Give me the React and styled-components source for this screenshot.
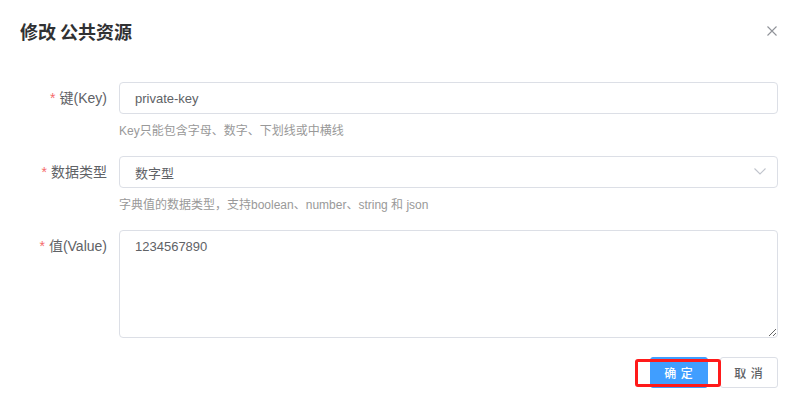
import React from 'react';
import styled, { createGlobalStyle } from 'styled-components';

const GlobalStyle = createGlobalStyle`
  html, body {
    margin: 0;
    padding: 0;
    background: #fff;
  }
  body {
    font-family: "Liberation Sans", "Noto Sans CJK SC", sans-serif;
    color: #606266;
  }
`;

const Dialog = styled.div`
  width: 796px;
  height: 419px;
  background: #fff;
  box-sizing: border-box;
  position: relative;
`;

const Header = styled.div`
  display: flex;
  align-items: center;
  justify-content: space-between;
  padding: 19px 20px 0 20px;
  height: 24px;
`;

const Title = styled.span`
  font-family: "Noto Sans CJK SC", sans-serif;
  font-size: 18px;
  line-height: 24px;
  font-weight: 700;
  color: #303133;
`;

const CloseButton = styled.button`
  border: none;
  background: none;
  padding: 0;
  width: 10px;
  height: 10px;
  display: flex;
  margin-right: -1px;
  cursor: pointer;
`;

const Body = styled.div`
  padding: 39px 18px 0 20px;
`;

const FormItem = styled.div`
  display: flex;
  margin-bottom: ${(p) => p.gap ?? 16}px;
`;

const Label = styled.label`
  width: 99px;
  flex: none;
  box-sizing: border-box;
  padding-right: 12px;
  text-align: right;
  font-size: 14px;
  line-height: 32px;
  color: #606266;
  white-space: nowrap;
`;

const Star = styled.span`
  color: #f56c6c;
  margin-right: 4px;
`;

const Content = styled.div`
  flex: 1;
  min-width: 0;
`;

const Input = styled.input`
  display: block;
  width: 100%;
  height: 32px;
  box-sizing: border-box;
  border: 1px solid #dcdfe6;
  border-radius: 4px;
  padding: 0 15px;
  font: inherit;
  font-size: 13px;
  color: #606266;
  outline: none;
  background: #fff;
`;

const SelectBox = styled.div`
  position: relative;
  height: 32px;
  box-sizing: border-box;
  border: 1px solid #dcdfe6;
  border-radius: 4px;
  padding: 0 30px 0 15px;
  display: flex;
  align-items: center;
  font-size: 13px;
  color: #606266;
`;

const Arrow = styled.svg`
  position: absolute;
  right: 11px;
  top: 11px;
`;

const TextArea = styled.textarea`
  display: block;
  width: 100%;
  height: 108px;
  box-sizing: border-box;
  border: 1px solid #dcdfe6;
  border-radius: 4px;
  padding: 5px 15px;
  font: inherit;
  font-size: 13px;
  line-height: 21px;
  color: #606266;
  resize: vertical;
  outline: none;
`;

const Hint = styled.div`
  font-size: 12px;
  line-height: 18px;
  padding-top: 8px;
  color: #999;
`;

const Footer = styled.div`
  display: flex;
  justify-content: flex-end;
  gap: 12px;
  padding: 19px 18px 0 20px;
`;

const ButtonWrap = styled.span`
  position: relative;
  display: inline-flex;
`;

const Button = styled.button`
  height: 31px;
  width: 58px;
  box-sizing: border-box;
  border-radius: 3px;
  font-family: "Noto Sans CJK SC", sans-serif;
  font-size: 12px;
  font-weight: 500;
  padding: 0;
  cursor: pointer;
  border: 1px solid ${(p) => (p.primary ? '#409eff' : '#dcdfe6')};
  background: ${(p) => (p.primary ? '#409eff' : '#fff')};
  color: ${(p) => (p.primary ? '#fff' : '#606266')};
  letter-spacing: 1px;
`;

const Highlight = styled.span`
  position: absolute;
  top: 2px;
  bottom: 1px;
  left: -15px;
  right: -13px;
  border: 3px solid #ff1a1a;
  border-radius: 3px;
  pointer-events: none;
`;

export default function App() {
  return (
    <>
      <GlobalStyle />
      <Dialog>
        <Header>
          <Title>修改 公共资源</Title>
          <CloseButton aria-label="关闭">
            <svg width="10" height="10" viewBox="0 0 10 10">
              <path d="M0.5 0.5 L9.5 9.5 M9.5 0.5 L0.5 9.5" stroke="#909399" strokeWidth="1.1" />
            </svg>
          </CloseButton>
        </Header>
        <Body>
          <FormItem>
            <Label><Star>*</Star>键(Key)</Label>
            <Content>
              <Input defaultValue="private-key" />
              <Hint>Key只能包含字母、数字、下划线或中横线</Hint>
            </Content>
          </FormItem>
          <FormItem>
            <Label><Star>*</Star>数据类型</Label>
            <Content>
              <SelectBox>
                数字型
                <Arrow width="12" height="7" viewBox="0 0 12 7">
                  <path d="M0.5 0.5 L6 6 L11.5 0.5" fill="none" stroke="#c0c4cc" strokeWidth="1.1" />
                </Arrow>
              </SelectBox>
              <Hint>字典值的数据类型，支持boolean、number、string 和 json</Hint>
            </Content>
          </FormItem>
          <FormItem gap={0}>
            <Label><Star>*</Star>值(Value)</Label>
            <Content>
              <TextArea defaultValue="1234567890" />
            </Content>
          </FormItem>
        </Body>
        <Footer>
          <ButtonWrap>
            <Button primary>确 定</Button>
            <Highlight />
          </ButtonWrap>
          <Button>取 消</Button>
        </Footer>
      </Dialog>
    </>
  );
}
